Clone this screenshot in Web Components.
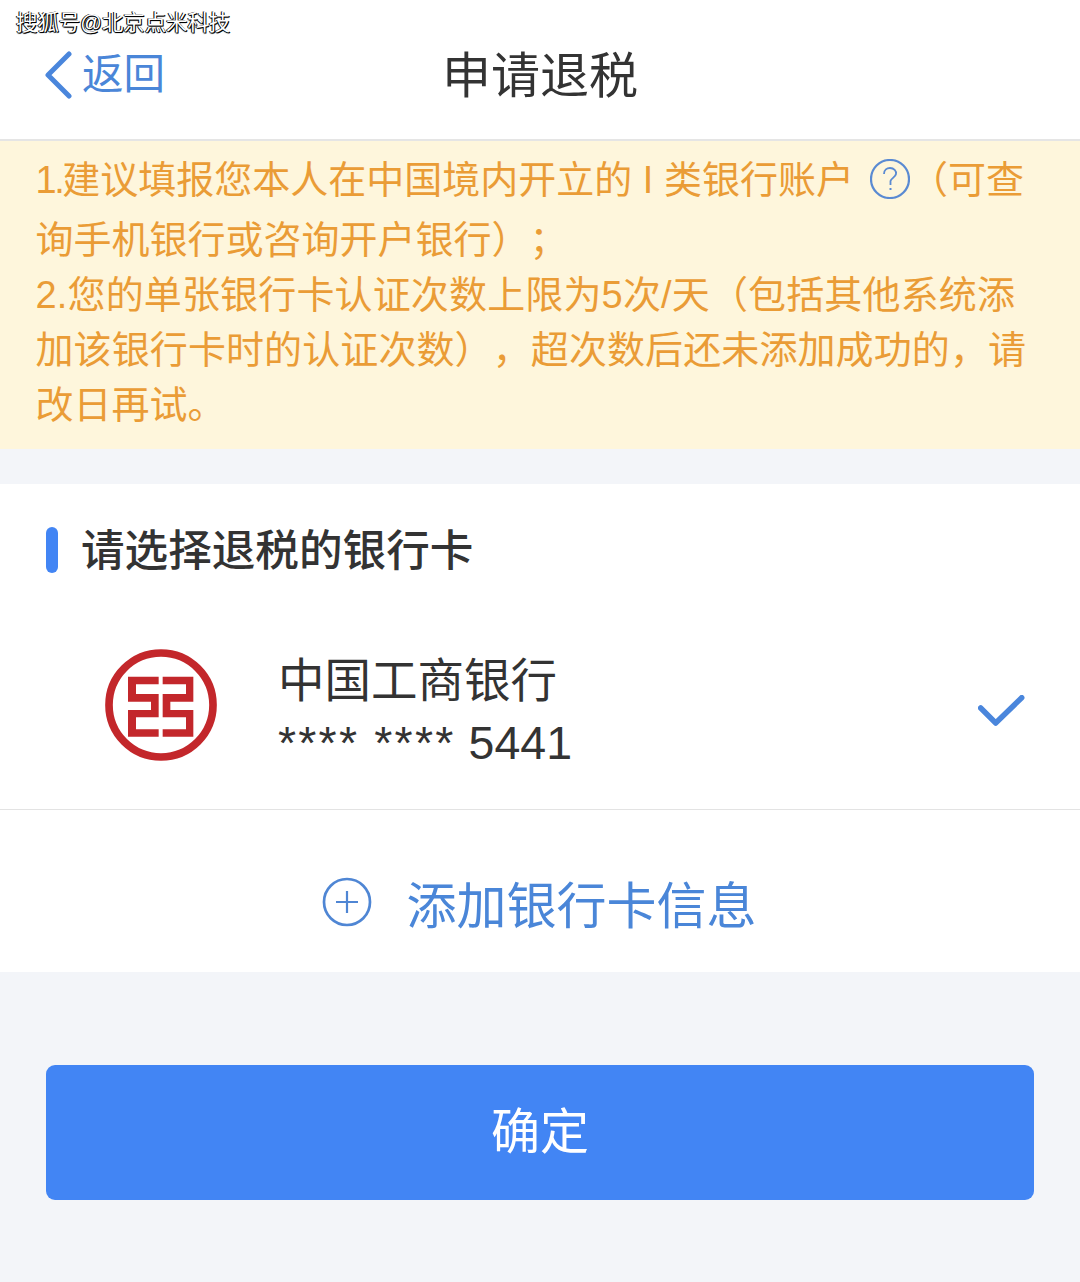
<!DOCTYPE html>
<html lang="zh">
<head>
<meta charset="utf-8">
<title>申请退税</title>
<style>
    html, body { margin: 0; padding: 0; }
    body {
        width: 1080px;
        height: 1282px;
        overflow: hidden;
        background: #f3f5f9;
        font-family: "Liberation Sans", "Noto Sans CJK SC", sans-serif;
        text-spacing-trim: space-all;
    }
</style>
</head>
<body>
<water-mark>搜狐号@北京点米科技</water-mark>
<nav-bar back="返回">申请退税</nav-bar>
<notice-bar>
    <div style="margin-bottom:5px"><span style="letter-spacing:-2.5px">1.</span>建议填报您本人在中国境内开立的 I 类银行账户<help-icon></help-icon>（可查</div>
    <div>询手机银行或咨询开户银行）；</div>
    <div style="letter-spacing:.15px">2.您的单张银行卡认证次数上限为5次/天（包括其他系统添</div>
    <div style="letter-spacing:.1px">加该银行卡时的认证次数），超次数后还未添加成功的，请</div>
    <div>改日再试。</div>
</notice-bar>
<card-section heading="请选择退税的银行卡">
    <bank-row name="中国工商银行" mask="**** ****" tail="5441"></bank-row>
    <add-row>添加银行卡信息</add-row>
</card-section>
<main-button>确定</main-button>

<script>
class WaterMark extends HTMLElement {
    constructor() {
        super();
        this.attachShadow({ mode: 'open' });
        this.shadowRoot.innerHTML = `
            <style>
                :host {
                    position: absolute;
                    top: 10px;
                    left: 16px;
                    z-index: 2;
                    font-size: 21.4px;
                    line-height: 26px;
                    color: #fff;
                    white-space: nowrap;
                    text-shadow: 1px 1px 0 #000, -1px 0 0 #000, 0 1px 1px #000;
                }
            </style>
            <slot></slot>
        `;
    }
}

class NavBar extends HTMLElement {
    constructor() {
        super();
        this.attachShadow({ mode: 'open' });
        this.shadowRoot.innerHTML = `
            <style>
                :host {
                    display: block;
                    position: relative;
                    height: 139px;
                    background: #fff;
                    border-bottom: 2px solid #e5e5e5;
                }
                .bar {
                    display: flex;
                    align-items: center;
                    justify-content: center;
                    height: 100%;
                    padding-top: 4px;
                    box-sizing: border-box;
                }
                .title {
                    font-size: 49px;
                    color: #333;
                }
                .back {
                    position: absolute;
                    left: 45px;
                    top: 51px;
                    display: flex;
                    align-items: center;
                    gap: 10px;
                    font-size: 41.5px;
                    line-height: 48px;
                    color: #4a86d8;
                }
                svg { display: block; }
            </style>
            <div class="bar">
                <div class="back">
                    <svg width="27" height="48" viewBox="0 0 27 48">
                        <path d="M24 3 L3 24 L24 45" fill="none" stroke="#4a86dc" stroke-width="5" stroke-linecap="round" stroke-linejoin="round"/>
                    </svg>
                    <span>${this.getAttribute('back')}</span>
                </div>
                <div class="title"><slot></slot></div>
            </div>
        `;
    }
}

class HelpIcon extends HTMLElement {
    constructor() {
        super();
        this.attachShadow({ mode: 'open' });
        this.shadowRoot.innerHTML = `
            <style>
                :host {
                    display: inline-block;
                    width: 40px;
                    height: 40px;
                    margin: 0 0 0 16px;
                    vertical-align: -6px;
                }
                svg { display: block; }
            </style>
            <svg width="40" height="40" viewBox="0 0 40 40" fill="none" stroke="#5a8ad2">
                <circle cx="20" cy="20" r="19" stroke-width="2.2"/>
                <path d="M14 15 C14 11 17 9 20 9 C24 9 26.500 12 26 15 C25.500 18 21 19.500 20.500 22 L20.500 26" stroke-width="1.800"/>
                <path d="M20.500 29 L20.500 31" stroke-width="2"/>
            </svg>
        `;
    }
}

class NoticeBar extends HTMLElement {
    constructor() {
        super();
        this.attachShadow({ mode: 'open' });
        this.shadowRoot.innerHTML = `
            <style>
                :host {
                    display: block;
                    height: 308px;
                    box-sizing: border-box;
                    padding: 12px 0 0 35.5px;
                    background: #fef6dc;
                    color: #ea9c36;
                    font-size: 38px;
                    line-height: 55px;
                    white-space: nowrap;
                }
            </style>
            <slot></slot>
        `;
    }
}

class CardSection extends HTMLElement {
    constructor() {
        super();
        this.attachShadow({ mode: 'open' });
        this.shadowRoot.innerHTML = `
            <style>
                :host {
                    display: block;
                    margin-top: 35px;
                    background: #fff;
                }
                .head {
                    display: flex;
                    align-items: center;
                    gap: 23px;
                    height: 131px;
                    padding-left: 46px;
                    font-size: 43.6px;
                    font-weight: 500;
                    color: #333;
                }
                .mark {
                    width: 12px;
                    height: 46px;
                    border-radius: 6px;
                    background: #4285f4;
                }
                .label { margin-top: -6px; }
            </style>
            <div class="head">
                <div class="mark"></div>
                <div class="label">${this.getAttribute('heading')}</div>
            </div>
            <slot></slot>
        `;
    }
}

class BankRow extends HTMLElement {
    constructor() {
        super();
        this.attachShadow({ mode: 'open' });
        this.shadowRoot.innerHTML = `
            <style>
                :host {
                    display: flex;
                    align-items: center;
                    height: 194px;
                    padding: 0 54px 0 105px;
                    border-bottom: 1px solid #e3e3e3;
                    color: #333;
                }
                .logo { width: 112px; height: 112px; margin-top: -14px; flex: none; }
                .info { margin-left: 61px; flex: 1; }
                .name { font-size: 46.5px; line-height: 62px; }
                .num { font-size: 46.5px; line-height: 62px; }
                .mask { letter-spacing: 2.2px; margin-right: -2px; }
                .check { flex: none; }
                svg { display: block; }
            </style>
            <svg class="logo" viewBox="47 57 336 336">
                <circle cx="215" cy="225" r="156" fill="none" stroke="#c3272b" stroke-width="23"/>
                <path fill="#c3272b" d="M116 140 H208 V163 H140 V192 H208 V262 H140 V298 H208 V320 H116 V240 H185 V215 H116 Z"/>
                <path fill="#c3272b" d="M220 140 H312 V215 H243 V240 H312 V320 H220 V298 H290 V262 H220 V192 H290 V163 H220 Z"/>
            </svg>
            <div class="info">
                <div class="name">${this.getAttribute('name')}</div>
                <div class="num"><span class="mask">${this.getAttribute('mask')} </span>${this.getAttribute('tail')}</div>
            </div>
            <svg class="check" width="48" height="34" viewBox="0 0 48 34">
                <path d="M2.700 13 L17.700 28 L43.700 2.700" fill="none" stroke="#4a86dc" stroke-width="5.500" stroke-linecap="round" stroke-linejoin="round"/>
            </svg>
        `;
    }
}

class AddRow extends HTMLElement {
    constructor() {
        super();
        this.attachShadow({ mode: 'open' });
        this.shadowRoot.innerHTML = `
            <style>
                :host {
                    display: flex;
                    align-items: center;
                    justify-content: center;
                    gap: 35px;
                    height: 162px;
                    box-sizing: border-box;
                    padding: 22px 2px 0 0;
                    font-size: 50px;
                    color: #4a86d8;
                }
                svg { display: block; }
            </style>
            <svg width="50" height="50" viewBox="0 0 50 50" fill="none" stroke="#4f86d4">
                <circle cx="25" cy="25" r="23" stroke-width="2.700"/>
                <path d="M14 25 H36 M25 14 V36" stroke-width="2.200"/>
            </svg>
            <span><slot></slot></span>
        `;
    }
}

class MainButton extends HTMLElement {
    constructor() {
        super();
        this.attachShadow({ mode: 'open' });
        this.shadowRoot.innerHTML = `
            <style>
                :host {
                    display: block;
                    margin: 93px 46px 0;
                }
                button {
                    display: block;
                    width: 100%;
                    height: 135px;
                    padding: 0 0 10px;
                    border: 0;
                    border-radius: 9px;
                    background: #4285f4;
                    color: #fff;
                    font: inherit;
                    font-size: 49px;
                }
            </style>
            <button><slot></slot></button>
        `;
    }
}

customElements.define('water-mark', WaterMark);
customElements.define('nav-bar', NavBar);
customElements.define('help-icon', HelpIcon);
customElements.define('notice-bar', NoticeBar);
customElements.define('card-section', CardSection);
customElements.define('bank-row', BankRow);
customElements.define('add-row', AddRow);
customElements.define('main-button', MainButton);
</script>
</body>
</html>
